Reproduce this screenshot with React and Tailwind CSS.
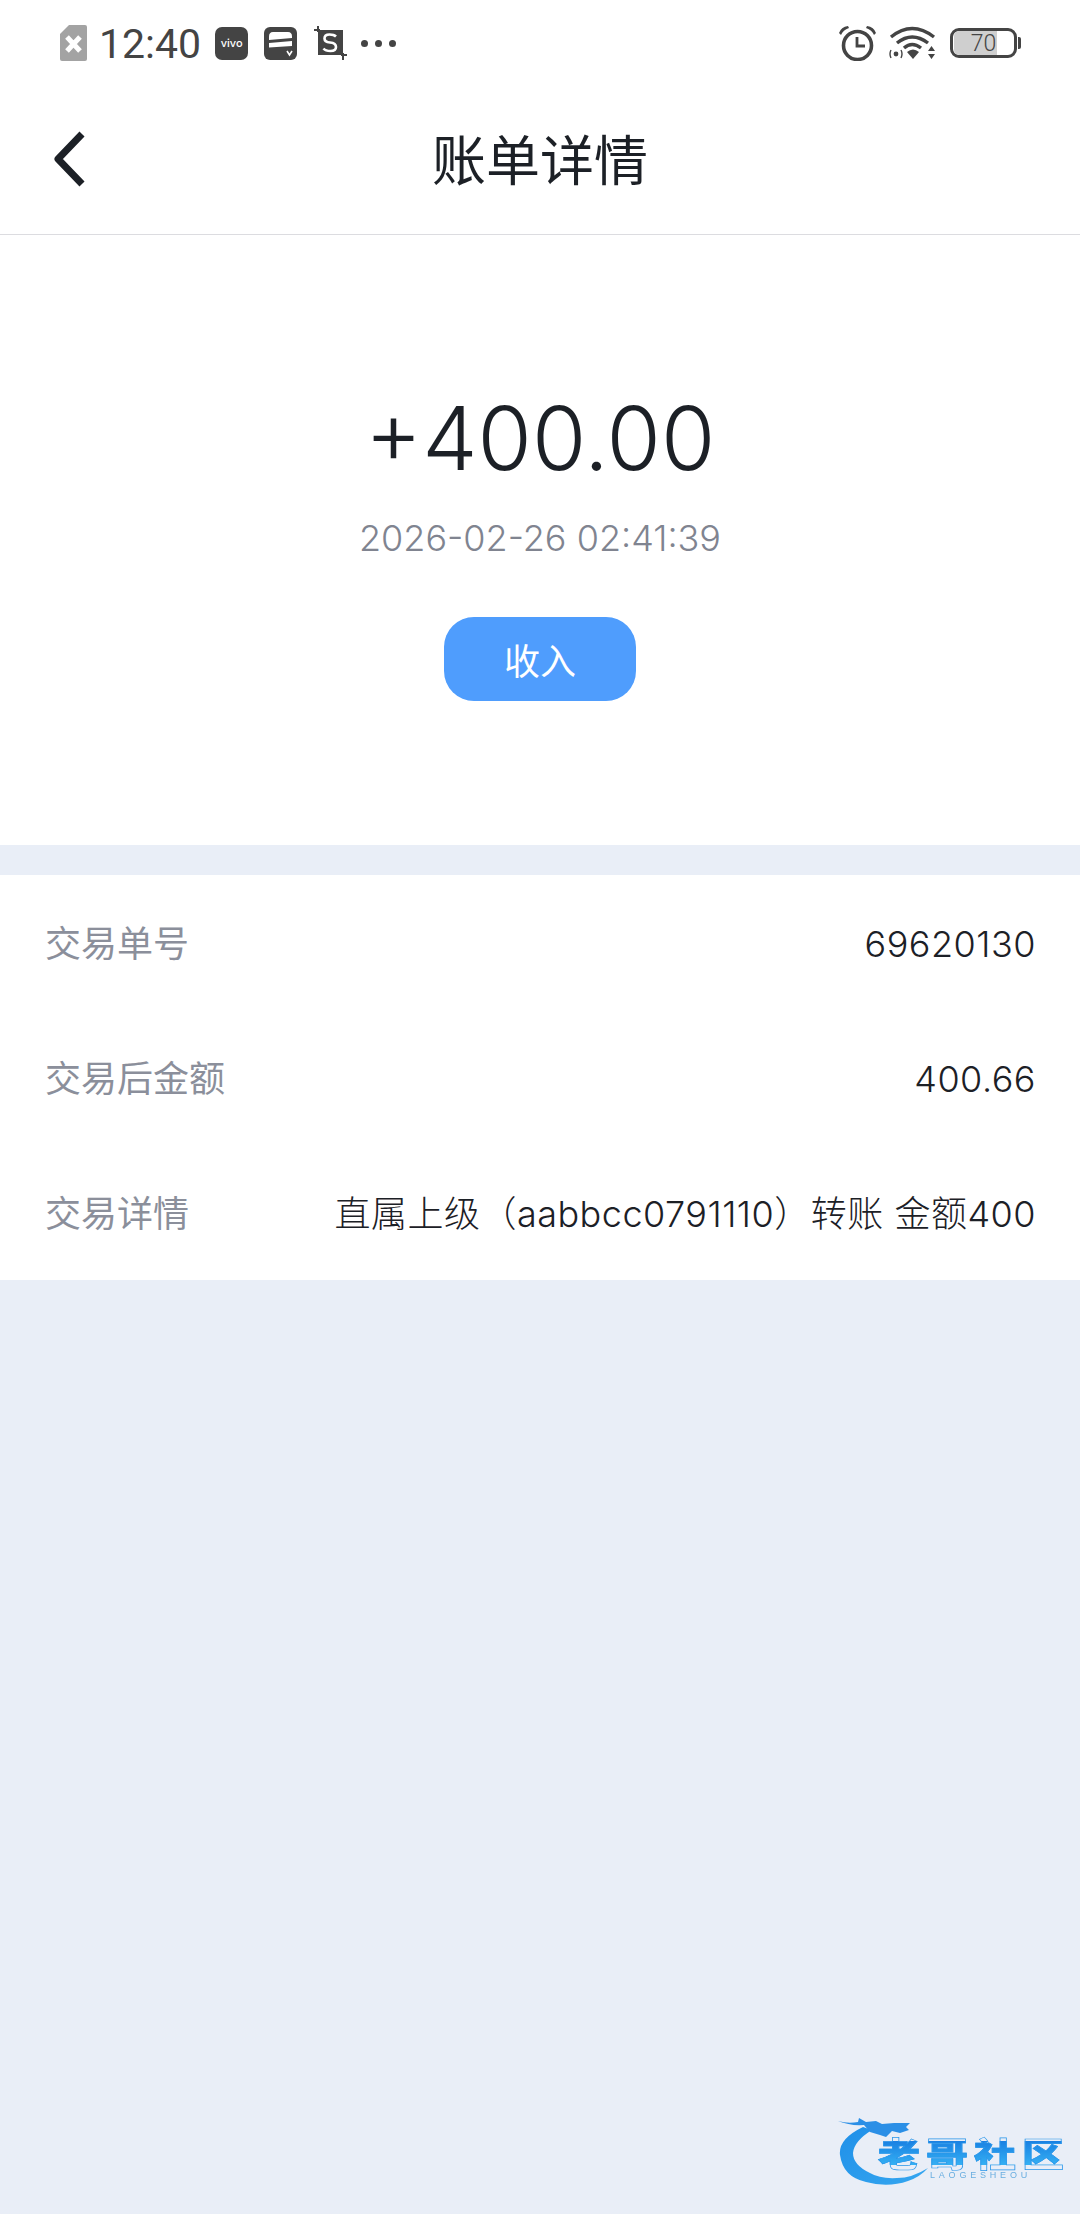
import React from 'react'

const rows = [
  { label: '交易单号', value: '69620130' },
  { label: '交易后金额', value: '400.66' },
  { label: '交易详情', value: '直属上级（aabbcc0791110）转账 金额400' },
]

function SimIcon() {
  return (
    <svg width="27" height="36" viewBox="0 0 27 36">
      <path d="M9 0H25a2 2 0 0 1 2 2V34a2 2 0 0 1-2 2H2a2 2 0 0 1-2-2V9Z" fill="#a3a3a3" />
      <path d="M7 12L20 26M20 12L7 26" stroke="#fff" strokeWidth="5" fill="none" />
    </svg>
  )
}

function CardIcon() {
  return (
    <svg width="33" height="33" viewBox="0 0 33 33">
      <rect width="33" height="33" rx="6" fill="#444" />
      <path d="M5 9.5Q5 5 9 5H24Q28 5 28 9.5V11L5 13Z" fill="#fff" />
      <path d="M5 16L28 14V19L5 20.5Z" fill="#fff" />
      <path d="M23 24L25.5 28L28 24" stroke="#fff" strokeWidth="1.6" fill="none" />
    </svg>
  )
}

function CropIcon() {
  return (
    <svg width="33" height="34" viewBox="0 0 33 34">
      <rect x="4" y="4" width="25" height="25" fill="#444" />
      <path d="M0 4H6M4 0V6M27 29H33M29 27V34" stroke="#444" strokeWidth="2" />
      <path d="M22 10.5Q20 8.5 15.5 8.5Q10.5 8.5 10.5 12.5Q10.5 16 16 16.5Q22 17 22 21Q22 25 16.5 25Q11.5 25 9.5 22.5" stroke="#fff" strokeWidth="2.6" fill="none" />
    </svg>
  )
}

function AlarmIcon() {
  return (
    <svg width="37" height="35" viewBox="0 0 37 35">
      <circle cx="18.5" cy="19.5" r="14" stroke="#444" strokeWidth="3.6" fill="none" />
      <path d="M18 11V20H26" stroke="#444" strokeWidth="2.8" fill="none" />
      <path d="M0 7Q2 1 9 0L10 2Q4 4 2 9Z" fill="#444" />
      <path d="M37 7Q35 1 28 0L27 2Q33 4 35 9Z" fill="#444" />
    </svg>
  )
}

function WifiIcon() {
  return (
    <svg width="48" height="34" viewBox="0 0 48 34">
      <path d="M2 11Q23 -6 45 11" stroke="#444" strokeWidth="3.4" fill="none" />
      <path d="M8 17Q23 5 39 17" stroke="#444" strokeWidth="3.4" fill="none" />
      <path d="M15 22Q23 15 32 22" stroke="#444" strokeWidth="3.4" fill="none" />
      <path d="M18 26Q24 21 30 26L24 33Z" fill="#444" />
      <circle cx="7" cy="28" r="2.4" fill="#444" />
      <path d="M2 24Q0 28 2 32M12 24Q14 28 12 32" stroke="#444" strokeWidth="1.4" fill="none" />
      <path d="M39 25L42.5 20L46 25ZM39 28H46L42.5 33Z" fill="#444" />
    </svg>
  )
}

function Logo() {
  return (
    <div className="absolute left-[838px] top-[2115px] w-[224px] h-[72px] blur-[0.7px]">
      <svg className="absolute left-0 top-0" width="100" height="72" viewBox="0 0 100 72">
        <defs>
          <linearGradient id="logoBody" x1="0" y1="0" x2="1" y2="1">
            <stop offset="0" stopColor="#1f8fe8" />
            <stop offset="1" stopColor="#36a7f0" />
          </linearGradient>
        </defs>
        <path d="M25 12Q0 24 2 40Q5 62 28 67Q50 73 70 66Q82 62 90 53Q74 63 59 63Q42 64 32 58Q15 50 15 38Q16 26 34 15Z" fill="url(#logoBody)" />
        <path d="M0 6Q10 9 20 7L21 3L28 7L38 6L44 9L56 8L72 8L68 12L71 15L62 18L54 16L48 22L42 20L32 17L26 10Q12 11 0 6Z" fill="#2b8fe6" />
      </svg>
      <div className="absolute left-[40px] top-[23px] h-[30px] text-[42px] leading-[30px] font-black tracking-[6px] whitespace-nowrap scale-y-[0.8] [-webkit-text-stroke:0.8px_#2a96ea] bg-gradient-to-b from-[#1a80e2] to-[#35b0f3] bg-clip-text text-transparent font-['Noto_Sans_CJK_SC',sans-serif]">
        老哥社区
      </div>
      <div className="absolute left-[92px] top-[56px] text-[9px] leading-[9px] tracking-[3.8px] text-[#6aaee0] font-['Liberation_Sans',sans-serif] whitespace-nowrap">
        LAOGESHEOU
      </div>
    </div>
  )
}

export default function App() {
  return (
    <div className="relative w-[1080px] h-[2214px] bg-[#e9eef7] overflow-hidden font-['Inter','Noto_Sans_CJK_SC',sans-serif]">
      {/* 状态栏 */}
      <div className="h-[86px] bg-white flex items-center justify-between pl-[60px] pr-[59px]">
        <div className="flex items-center">
          <SimIcon />
          <span className="ml-[12px] mt-[2px] text-[41px] leading-none text-[#444] font-['Roboto',sans-serif]">12:40</span>
          <div className="ml-[14px] w-[33px] h-[33px] rounded-[7px] bg-[#444] flex items-center justify-center text-[11px] font-medium text-white">vivo</div>
          <div className="ml-[16px]"><CardIcon /></div>
          <div className="ml-[17px]"><CropIcon /></div>
          <div className="ml-[14px] flex gap-[7px]">
            <span className="w-[7px] h-[7px] rounded-full bg-[#444]" />
            <span className="w-[7px] h-[7px] rounded-full bg-[#444]" />
            <span className="w-[7px] h-[7px] rounded-full bg-[#444]" />
          </div>
        </div>
        <div className="flex items-center">
          <AlarmIcon />
          <div className="ml-[13px]"><WifiIcon /></div>
          <div className="ml-[13px] flex items-center">
            <div className="relative w-[67px] h-[30px] rounded-[9px] border-[3px] border-[#444] overflow-hidden">
              <div className="h-full w-[70%] bg-[#cfcfcf] rounded-l-[5px] ml-[1px]" />
              <span className="absolute inset-0 flex items-center justify-center text-[23px] font-light leading-none text-[#444] font-['Roboto',sans-serif]">70</span>
            </div>
            <div className="w-[3px] h-[12px] bg-[#444] rounded-r-[2px] ml-[1px]" />
          </div>
        </div>
      </div>

      {/* 导航 */}
      <div className="h-[149px] bg-white border-b border-[#dcdce0] flex items-center relative justify-center">
        <svg className="absolute left-[51px] top-[44px]" width="36" height="58" viewBox="0 0 36 58">
          <path d="M31 4L7 29L31 54" stroke="#1c2026" strokeWidth="7" fill="none" strokeLinejoin="round" />
        </svg>
        <h1 className="text-[54px] leading-none font-normal text-[#1c2026] -mt-[4px] font-['Noto_Sans_CJK_SC',sans-serif]">账单详情</h1>
      </div>

      {/* 金额 */}
      <div className="h-[610px] bg-white flex flex-col items-center pt-[153px]">
        <div className="text-[88px] leading-[100px] font-light text-[#1c2026]">+400.00</div>
        <div className="mt-[28px] text-[36px] leading-[44px] font-light text-[#808490]">2026-02-26 02:41:39</div>
        <div className="mt-[57px] w-[192px] h-[84px] rounded-[30px] bg-[#4f9dfd] flex items-center justify-center text-[36px] text-white font-['Noto_Sans_CJK_SC',sans-serif]">收入</div>
      </div>

      {/* 详情 */}
      <div className="mt-[30px] h-[405px] bg-white px-[45px] flex flex-col justify-center">
        {rows.map((row) => (
          <div key={row.label} className="h-[135px] pt-[2px] flex items-center justify-between text-[36px]">
            <span className="text-[#8b8f9b]">{row.label}</span>
            <span className="font-light tracking-[0.5px] -mr-[1px] text-[#1c2026]">{row.value}</span>
          </div>
        ))}
      </div>

      <Logo />
    </div>
  )
}
